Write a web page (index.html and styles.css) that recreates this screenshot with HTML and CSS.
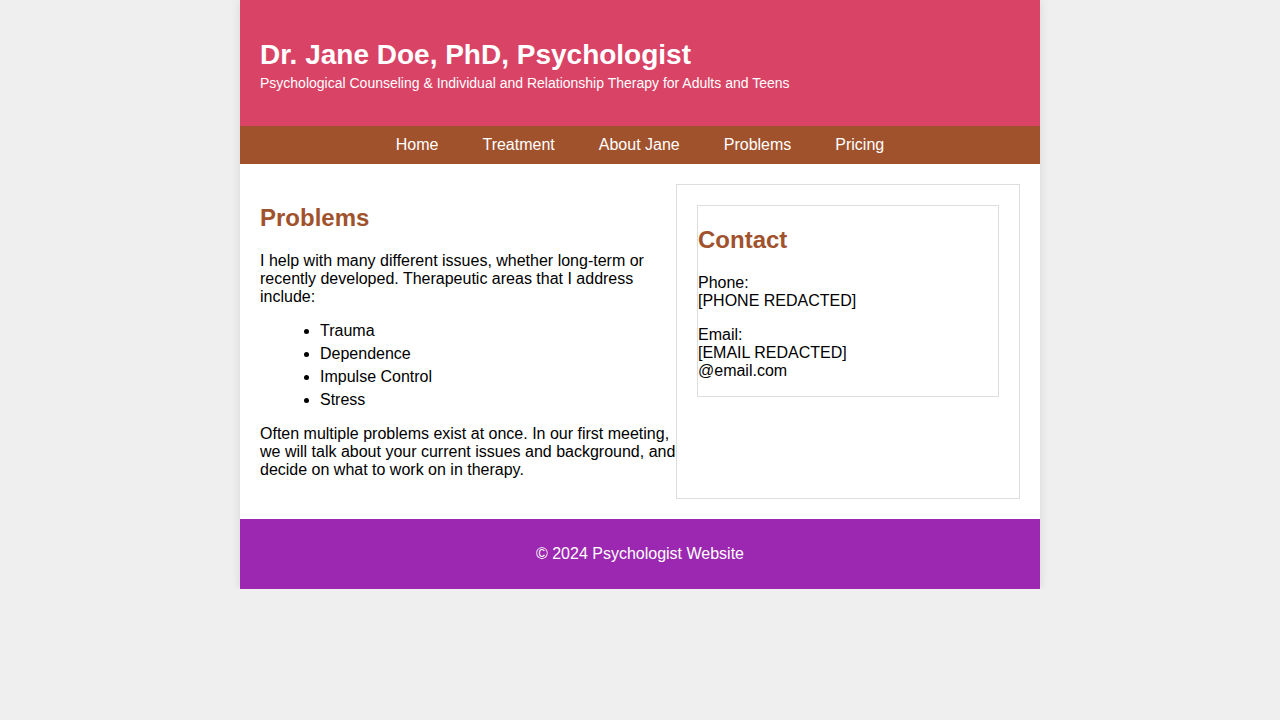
FILE: index.html
```html
<!DOCTYPE html>
<html lang="en">
<head>
<meta charset="utf-8">
<title>Dr. Jane Doe, PhD, Psychologist</title>
<link rel="stylesheet" href="styles.css">
</head>
<body>
<div class="page">
  <header class="site-header">
    <h1 class="site-title">Dr. Jane Doe, PhD, Psychologist</h1>
    <p class="site-subtitle">Psychological Counseling &amp; Individual and Relationship Therapy for Adults and Teens</p>
  </header>
  <nav class="site-nav">
    <a href="#">Home</a>
    <a href="#">Treatment</a>
    <a href="#">About Jane</a>
    <a href="#">Problems</a>
    <a href="#">Pricing</a>
  </nav>
  <main class="content">
    <section class="primary">
      <h2 class="heading">Problems</h2>
      <p>I help with many different issues, whether long-term or recently developed. Therapeutic areas that I address include:</p>
      <ul class="issues">
        <li>Trauma</li>
        <li>Dependence</li>
        <li>Impulse Control</li>
        <li>Stress</li>
      </ul>
      <p>Often multiple problems exist at once. In our first meeting, we will talk about your current issues and background, and decide on what to work on in therapy.</p>
    </section>
    <aside class="sidebar">
      <div class="contact">
        <h3 class="heading">Contact</h3>
        <p>Phone:<br>[PHONE REDACTED]</p>
        <p>Email:<br>[EMAIL REDACTED]<br>@email.com</p>
      </div>
    </aside>
  </main>
  <footer class="site-footer">© 2024 Psychologist Website</footer>
</div>
</body>
</html>
```
FILE: styles.css
```css
html, body {
  margin: 0;
  padding: 0;
}
body {
  background: #efefef;
  font-family: "Liberation Sans", Arial, sans-serif;
  font-size: 16px;
  line-height: 18px;
  color: #000;
}
.page {
  width: 800px;
  margin: 0 auto;
  background: #fff;
  box-shadow: 0 0 10px rgba(0, 0, 0, 0.1);
}
.site-header {
  background: #d94366;
  color: #fff;
  padding: 39px 20px 35px;
}
.site-title {
  margin: 0;
  font-size: 28px;
  font-weight: bold;
  line-height: 32px;
}
.site-subtitle {
  margin: 4px 0 0;
  font-size: 14px;
  line-height: 16px;
}
.site-nav {
  background: #a0522d;
  display: flex;
  justify-content: center;
  padding: 10px 0;
}
.site-nav a {
  color: #fff;
  text-decoration: none;
  padding: 0 22px;
  line-height: 18px;
}
.content {
  display: flex;
  padding: 20px;
}
.primary {
  flex: 1;
  padding-bottom: 4px;
}
.heading {
  color: #a0522d;
  font-size: 24px;
  font-weight: bold;
  line-height: 28px;
  margin: 20px 0;
}
.primary p {
  margin: 16px 0;
}
.issues {
  margin: 16px 0;
  padding-left: 60px;
}
.issues li {
  margin-bottom: 5px;
}
.sidebar {
  width: 344px;
  box-sizing: border-box;
  border: 1px solid #ddd;
  padding: 20px;
}
.contact {
  border: 1px solid #ddd;
}
.contact p {
  margin: 16px 0;
}
.site-footer {
  background: #9c27b0;
  color: #fff;
  text-align: center;
  padding: 26px 0;
  line-height: 18px;
}
```
